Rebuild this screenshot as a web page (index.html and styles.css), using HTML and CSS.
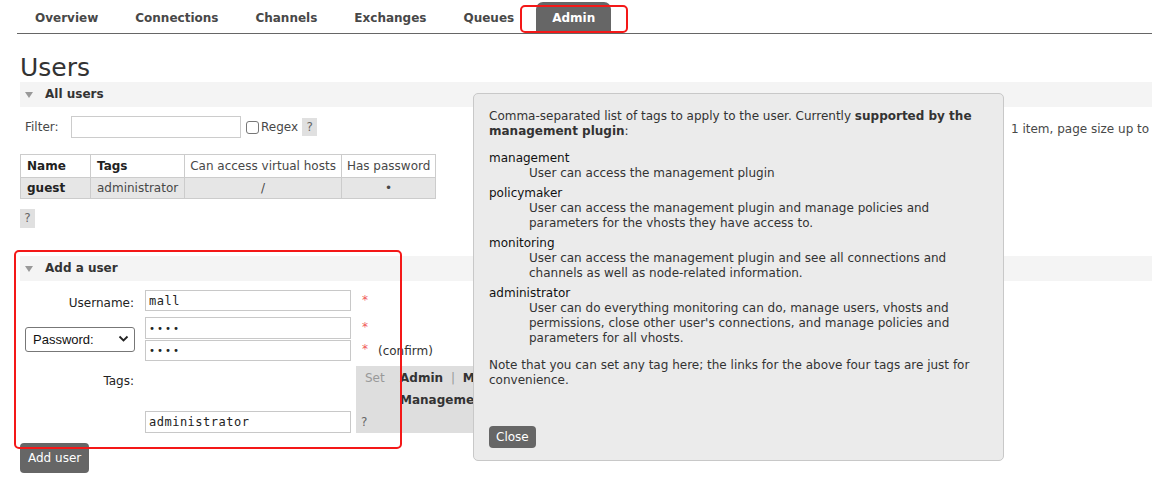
FILE: index.html
```html
<!DOCTYPE html>
<html>
<head>
<meta charset="utf-8">
<title>Users - Admin</title>
<link rel="stylesheet" href="styles.css">
</head>
<body>
<nav class="menu">
  <ul>
    <li><a>Overview</a></li>
    <li><a>Connections</a></li>
    <li><a>Channels</a></li>
    <li><a>Exchanges</a></li>
    <li><a>Queues</a></li>
    <li><a class="selected">Admin</a></li>
  </ul>
</nav>
<div class="mark mark-tab"></div>

<main class="main">
  <h1>Users</h1>

  <section class="section">
    <h2><span class="tri"></span>All users</h2>
    <div class="filter-row">
      <div class="filter">
        <label class="filter-label">Filter:</label>
        <input class="filter-input" type="text">
        <span class="check"></span>
        <span class="regex">Regex</span>
        <span class="help">?</span>
      </div>
      <div class="pager">1 item, page size up to</div>
    </div>

    <table class="list">
      <thead>
        <tr>
          <th class="c-name">Name</th>
          <th class="c-tags">Tags</th>
          <th class="c-vh plain">Can access virtual hosts</th>
          <th class="c-pw plain">Has password</th>
        </tr>
      </thead>
      <tbody>
        <tr>
          <td class="bold">guest</td>
          <td>administrator</td>
          <td class="center">/</td>
          <td class="center">&bull;</td>
        </tr>
      </tbody>
    </table>
    <span class="help help-block">?</span>
  </section>

  <section class="section add">
    <h2><span class="tri"></span>Add a user</h2>
    <div class="form">
      <label class="lbl r1">Username:</label>
      <input class="txt r1" type="text" value="mall">
      <span class="req r1">*</span>

      <div class="pw-select"><span>Password:</span><svg width="11" height="8" viewBox="0 0 11 8"><path d="M1.5 1.5 L5.5 5.5 L9.5 1.5" fill="none" stroke="#222" stroke-width="1.8"/></svg></div>
      <input class="txt r2" type="password" value="1234">
      <span class="req r2">*</span>
      <input class="txt r3" type="password" value="1234">
      <span class="req r3">*<span class="confirm">(confirm)</span></span>

      <label class="lbl lbl-tags">Tags:</label>
      <input class="txt r4" type="text" value="administrator">
      <div class="argpanel">
        <div class="arglinks">
          <span class="set">Set</span>
          <span class="links"><b>Admin</b> <i>|</i> <b>Monitoring</b> <i>|</i> <b>Policymaker</b> <i>|</i> <b>Management</b> <i>|</i> <b>Impersonator</b> <i>|</i> <b>None</b></span>
        </div>
        <span class="pq">?</span>
      </div>
    </div>
    <button class="btn add-btn">Add user</button>
  </section>
</main>
<div class="mark mark-form"></div>

<div class="popup">
  <p>Comma-separated list of tags to apply to the user. Currently <b>supported by the management plugin</b>:</p>
  <dl>
    <dt>management</dt>
    <dd>User can access the management plugin</dd>
    <dt>policymaker</dt>
    <dd>User can access the management plugin and manage policies and parameters for the vhosts they have access to.</dd>
    <dt>monitoring</dt>
    <dd>User can access the management plugin and see all connections and channels as well as node-related information.</dd>
    <dt>administrator</dt>
    <dd>User can do everything monitoring can do, manage users, vhosts and permissions, close other user's connections, and manage policies and parameters for all vhosts.</dd>
  </dl>
  <p>Note that you can set any tag here; the links for the above four tags are just for convenience.</p>
  <button class="btn close-btn">Close</button>
</div>
</body>
</html>
```

FILE: styles.css
```css
html, body {
  margin: 0;
  padding: 0;
  background: #fff;
}
body {
  font-family: "DejaVu Sans", Verdana, sans-serif;
  font-size: 12px;
  line-height: 15px;
  color: #484848;
  overflow: hidden;
  width: 1152px;
  height: 484px;
  position: relative;
}

/* menu */
.menu {
  margin-left: 17px;
  padding-top: 2px;
  border-bottom: 1px solid #666;
}
.menu ul {
  display: flex;
  list-style: none;
  margin: 0;
  padding: 0 0 0 3px;
}
.menu li {
  margin-right: 7px;
}
.menu a {
  display: block;
  padding: 9px 15px 7px;
  font-weight: bold;
  color: #484848;
  border-radius: 7px 7px 0 0;
}
.menu a.selected {
  background: #666;
  color: #fff;
  padding: 9px 16px 7px;
}

/* annotation marks */
.mark {
  position: absolute;
  border: 2px solid #f41818;
  border-radius: 5px;
}
.mark-tab {
  left: 520px;
  top: 5px;
  width: 104px;
  height: 24px;
}
.mark-form {
  left: 14px;
  top: 250px;
  width: 384px;
  height: 195px;
}

.main {
  padding-left: 20px;
}
h1 {
  margin: 19px 0 0;
  font-size: 25px;
  line-height: 29px;
  font-weight: normal;
  color: #333;
}
.section h2 {
  margin: 0;
  height: 25px;
  line-height: 25px;
  background: #f4f4f4;
  font-size: 12px;
  font-weight: bold;
  color: #333;
  padding-left: 5px;
  display: flex;
  align-items: center;
}
.tri {
  width: 0;
  height: 0;
  border-left: 4.5px solid transparent;
  border-right: 4.5px solid transparent;
  border-top: 6px solid #999;
  margin-right: 12px;
}

/* filter */
.filter-row {
  display: grid;
  grid-template-columns: 991px max-content;
  align-items: center;
  margin-top: 9px;
  height: 22px;
}
.filter {
  display: flex;
  align-items: center;
  padding-left: 5px;
}
.filter-label {
  width: 46px;
}
.filter-input {
  width: 170px;
  height: 22px;
  box-sizing: border-box;
  border: 1px solid #ccc;
  margin: 0;
  padding: 0 3px;
}
.check {
  width: 13px;
  height: 13px;
  box-sizing: border-box;
  border: 1px solid #777;
  border-radius: 3px;
  background: #fff;
  margin-left: 5px;
  margin-right: 2px;
}
.regex {
  margin-right: 4px;
}
.help {
  display: inline-block;
  width: 15px;
  height: 18px;
  line-height: 18px;
  text-align: center;
  background: #e0e0e0;
  color: #666;
}
.pager {
  white-space: nowrap;
  padding-top: 4px;
}

/* table */
.list {
  border-collapse: collapse;
  margin-top: 16px;
}
.list th, .list td {
  border: 1px solid #ccc;
  padding: 0 6px;
  white-space: nowrap;
}
.list th {
  height: 22px;
  text-align: left;
  font-weight: bold;
  color: #222;
  background: #fff;
}
.list th.plain {
  font-weight: normal;
  color: #484848;
  text-align: center;
  padding: 0 5px;
}
.list td {
  height: 20px;
  background: #e6e6e6;
}
.list td.bold {
  font-weight: bold;
  color: #222;
}
.list td.center {
  text-align: center;
}
.c-name { width: 57px; }
.c-tags { width: 80px; }
.help-block {
  display: block;
  margin-top: 10px;
  height: 19px;
  line-height: 19px;
}

/* add user */
.add {
  margin-top: 28px;
}
.form {
  display: grid;
  grid-template-columns: 115px 216px auto;
  margin-top: 9px;
  align-items: center;
}
.lbl {
  grid-column: 1;
  text-align: right;
  color: #222;
  padding-right: 1px;
}
.r1 { grid-row: 1; }
.r2 { grid-row: 2; }
.r3 { grid-row: 3; }
.r4 { grid-row: 4; }
.txt {
  grid-column: 2;
  margin: 0 0 0 10px;
  width: 206px;
  height: 22px;
  box-sizing: border-box;
  border: 1px solid #c8c8c8;
  padding: 0 3px;
  font-family: "DejaVu Sans Mono", monospace;
  font-size: 12px;
  color: #222;
  letter-spacing: 0.5px;
}
input.txt.r1 { margin-bottom: 6px; height: 21px; }
input.txt.r3 { margin-top: 1px; height: 21px; }
input[type="password"].txt {
  font-size: 10px;
  letter-spacing: 2px;
}
.req {
  grid-column: 3;
  color: #f05a5a;
  padding-left: 11px;
  white-space: nowrap;
  align-self: start;
  padding-top: 3px;
}
.confirm {
  color: #333;
  margin-left: 10px;
  position: relative;
  top: 2px;
}
.pw-select {
  grid-column: 1;
  grid-row: 2 / 4;
  margin-left: 5px;
  width: 110px;
  height: 25px;
  box-sizing: border-box;
  border: 1px solid #777;
  border-radius: 3px;
  background: #fff;
  display: flex;
  align-items: center;
  justify-content: space-between;
  padding: 0 5px 0 7px;
  font-family: "Liberation Sans", Arial, sans-serif;
  font-size: 13px;
  color: #111;
}
.lbl-tags {
  grid-row: 4;
  align-self: start;
  padding-top: 8px;
  margin-top: 5px;
}
input.txt.r4 {
  align-self: end;
}
.argpanel {
  grid-column: 3;
  grid-row: 4;
  margin-top: 5px;
  margin-left: 5px;
  width: 300px;
  height: 67px;
  background: #dedede;
  box-sizing: border-box;
  padding-top: 1px;
}
.arglinks {
  display: grid;
  grid-template-columns: 44px 1fr;
  line-height: 22px;
}
.set {
  color: #999;
  padding-left: 9px;
}
.links b {
  color: #333;
}
.links i {
  font-style: normal;
  color: #999;
  margin: 0 4px;
}
.pq {
  display: block;
  padding-left: 5px;
  line-height: 22px;
  color: #666;
}
.btn {
  font-family: "DejaVu Sans", Verdana, sans-serif;
  font-size: 12px;
  background: #666;
  color: #fff;
  border: none;
  border-radius: 4px;
  cursor: pointer;
}
.add-btn {
  display: block;
  margin-top: 10px;
  height: 30px;
  padding: 0 8px;
}

/* popup */
.popup {
  position: absolute;
  left: 473px;
  top: 93px;
  width: 531px;
  height: 368px;
  box-sizing: border-box;
  background: #ebebeb;
  border: 1px solid #c8c8c8;
  border-radius: 5px;
  padding: 15px 15px 12px;
  color: #333;
}
.popup p {
  margin: 0 0 12px;
}
.popup b {
  color: #333;
}
.popup dl {
  margin: 0;
}
.popup dt {
  color: #111;
}
.popup dd {
  margin: 0 0 5px 40px;
}
.popup dd:last-child {
  margin-bottom: 12px;
}
.close-btn {
  position: absolute;
  left: 15px;
  bottom: 12px;
  height: 22px;
  padding: 0 7px;
}
```
